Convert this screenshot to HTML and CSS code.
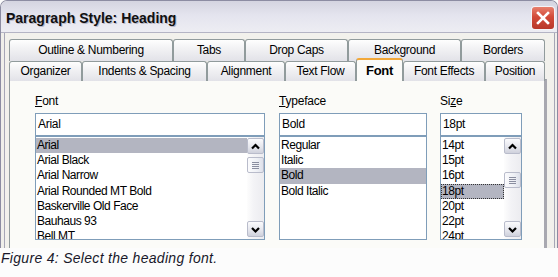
FILE: index.html
```html
<!DOCTYPE html>
<html>
<head>
<meta charset="utf-8">
<link rel="stylesheet" href="styles.css">
</head>
<body>
<div class="window">
  <div class="titlebar">
    <span class="title">Paragraph Style: Heading</span>
    <span class="close"><svg width="22" height="22" viewBox="0 0 22 22"><path d="M6 6 L16 16 M16 6 L6 16" stroke="#fff" stroke-width="2.6" stroke-linecap="square"/></svg></span>
  </div>
  <div class="client">
    <div class="tabrow back">
      <div class="tab">Outline &amp; Numbering</div>
      <div class="tab">Tabs</div>
      <div class="tab">Drop Caps</div>
      <div class="tab">Background</div>
      <div class="tab">Borders</div>
    </div>
    <div class="tabrow front">
      <div class="tab">Organizer</div>
      <div class="tab">Indents &amp; Spacing</div>
      <div class="tab">Alignment</div>
      <div class="tab">Text Flow</div>
      <div class="tab active">Font</div>
      <div class="tab">Font Effects</div>
      <div class="tab">Position</div>
    </div>
    <div class="panel">
      <div class="fields">
        <div class="field f-font">
          <div class="label"><u>F</u>ont</div>
          <div class="input">Arial</div>
          <div class="list">
            <div class="items">
              <div class="item sel">Arial</div>
              <div class="item">Arial Black</div>
              <div class="item">Arial Narrow</div>
              <div class="item">Arial Rounded MT Bold</div>
              <div class="item">Baskerville Old Face</div>
              <div class="item">Bauhaus 93</div>
              <div class="item">Bell MT</div>
            </div>
            <div class="scrollbar">
              <div class="sbtn"><svg width="15" height="15" viewBox="0 0 15 15"><path d="M4 9.5 L7.5 6 L11 9.5" fill="none" stroke="#000" stroke-width="2.2"/></svg></div>
              <div class="track">
                <div class="thumb t-font"><span></span><span></span><span></span><span></span></div>
              </div>
              <div class="sbtn"><svg width="15" height="15" viewBox="0 0 15 15"><path d="M4 6 L7.5 9.5 L11 6" fill="none" stroke="#000" stroke-width="2.2"/></svg></div>
            </div>
          </div>
        </div>
        <div class="field f-face">
          <div class="label"><u>T</u>ypeface</div>
          <div class="input">Bold</div>
          <div class="list">
            <div class="items">
              <div class="item">Regular</div>
              <div class="item">Italic</div>
              <div class="item sel">Bold</div>
              <div class="item">Bold Italic</div>
            </div>
          </div>
        </div>
        <div class="field f-size">
          <div class="label">Si<u>z</u>e</div>
          <div class="input">18pt</div>
          <div class="list">
            <div class="items">
              <div class="item">14pt</div>
              <div class="item">15pt</div>
              <div class="item">16pt</div>
              <div class="item sel focus">18pt</div>
              <div class="item">20pt</div>
              <div class="item">22pt</div>
              <div class="item">24pt</div>
            </div>
            <div class="scrollbar">
              <div class="sbtn"><svg width="15" height="15" viewBox="0 0 15 15"><path d="M4 9.5 L7.5 6 L11 9.5" fill="none" stroke="#000" stroke-width="2.2"/></svg></div>
              <div class="track">
                <div class="thumb t-size"><span></span><span></span><span></span><span></span></div>
              </div>
              <div class="sbtn"><svg width="15" height="15" viewBox="0 0 15 15"><path d="M4 6 L7.5 9.5 L11 6" fill="none" stroke="#000" stroke-width="2.2"/></svg></div>
            </div>
          </div>
        </div>
      </div>
    </div>
  </div>
</div>
<p class="caption">Figure 4: Select the heading font.</p>
</body>
</html>
```
FILE: styles.css
```css
html, body {
  margin: 0;
  padding: 0;
  background: #fcfcfc;
}
body {
  font-family: "Liberation Sans", Arial, sans-serif;
  color: #000;
}
.window {
  width: 558px;
  height: 248px;
  box-sizing: border-box;
  border: 1px solid #8c8ca2;
  border-bottom: none;
  border-radius: 7px 7px 0 0;
  background: #f0efea;
  overflow: hidden;
}
.titlebar {
  height: 31px;
  display: flex;
  align-items: flex-start;
  justify-content: space-between;
  background: linear-gradient(180deg, #d4d4e0 0%, #e4e4ee 45%, #ededf3 100%);
  border-bottom: 1px solid #b4b4c4;
}
.title {
  font-weight: bold;
  font-size: 14px;
  line-height: 16px;
  margin: 9px 0 0 5px;
  color: #101010;
  text-shadow: 1px 1px 0 #b8b8c8;
}
.close {
  width: 22px;
  height: 22px;
  margin: 6px 3px 0 0;
  border-radius: 3px;
  background: linear-gradient(180deg, #e8806e 0%, #d24a38 45%, #b8382a 100%);
  box-shadow: 0 0 0 1px #f4f4f8;
}
.close svg { display: block; }
.client {
  height: 215px;
  margin: 0 2px 0 3px;
  border-left: 1px solid #a6a6b6;
  border-right: 1px solid #a6a6b6;
  padding: 6px 7px 0 4px;
  background: #f2f1ec;
}
.tabrow {
  display: grid;
  font-size: 12px;
  letter-spacing: -0.3px;
}
.back {
  grid-template-columns: 164px 72px 103px 113px 84px;
  height: 22px;
}
.front {
  grid-template-columns: 73px 125px 78px 71px 47px 82px 60px;
  height: 18px;
  position: relative;
  z-index: 1;
}
.tab {
  box-sizing: border-box;
  border: 1px solid #919b9c;
  border-bottom: none;
  border-radius: 3px 3px 0 0;
  background: linear-gradient(180deg, #fefefe 0%, #f2f2f4 40%, #e2e2e8 100%);
  text-align: center;
  color: #000;
  white-space: nowrap;
}
.back .tab { line-height: 21px; }
.front .tab { line-height: 19px; }
.front .tab.active {
  margin-top: -3px;
  height: 23px;
  border-top: 2px solid #f2a83a;
  background: #fbfbf9;
  font-weight: bold;
  line-height: 21px;
  font-size: 13px;
}
.panel {
  height: 175px;
  box-sizing: border-box;
  border: 1px solid #919b9c;
  border-right: 3px solid #a8a8b0;
  border-bottom: none;
  background: #fbfbf8;
  padding: 14px 0 0 25px;
}
.fields {
  display: flex;
  gap: 14px;
}
.f-font { width: 230px; }
.f-face { width: 148px; margin-right: -1px; }
.f-size { width: 82px; }
.label {
  font-size: 12px;
  line-height: 14px;
  height: 14px;
  margin-bottom: 5px;
  letter-spacing: -0.2px;
}
.input {
  height: 23px;
  box-sizing: border-box;
  border: 1px solid #7f9db9;
  background: #fff;
  font-size: 12px;
  line-height: 21px;
  padding-left: 2px;
  letter-spacing: -0.3px;
}
.list {
  height: 104px;
  box-sizing: border-box;
  border: 1px solid #7f9db9;
  background: #fff;
  display: flex;
  overflow: hidden;
}
.items {
  flex: 1;
  padding-top: 1px;
  overflow: hidden;
}
.item {
  height: 15.2px;
  line-height: 15px;
  font-size: 12px;
  letter-spacing: -0.45px;
  padding-left: 1px;
  white-space: nowrap;
  box-sizing: border-box;
}
.item.sel { background: #b3b5c1; }
.item.focus { outline: 1px dotted #333; outline-offset: -1px; }
.scrollbar {
  width: 17px;
  display: flex;
  flex-direction: column;
  padding: 1px 0 2px;
  box-sizing: border-box;
  background: linear-gradient(90deg, #fdfdfd 0%, #f3f3f6 40%, #ececf0 100%);
}
.sbtn {
  height: 16px;
  box-sizing: border-box;
  border: 1px solid #b9bccb;
  border-radius: 2px;
  background: linear-gradient(180deg, #fbfbfd 0%, #e4e5ec 60%, #cfd1dc 100%);
  display: flex;
  align-items: center;
  justify-content: center;
}
.sbtn svg { display: block; }
.track {
  flex: 1;
  position: relative;
}
.thumb {
  position: absolute;
  left: 0;
  right: 0;
  height: 16px;
  box-sizing: border-box;
  border: 1px solid #b9bccb;
  border-radius: 2px;
  background: linear-gradient(90deg, #fbfbfd 0%, #eef0f5 60%, #dde0ea 100%);
  display: flex;
  flex-direction: column;
  align-items: center;
  justify-content: center;
  gap: 1px;
}
.thumb span {
  display: block;
  width: 7px;
  height: 1px;
  background: #8a8ea0;
}
.t-font { top: 3px; }
.t-size { top: 18px; }
.caption {
  margin: 2px 0 0 1px;
  font-size: 14px;
  line-height: 16px;
  font-style: italic;
  letter-spacing: 0.3px;
  color: #18182a;
}
```
